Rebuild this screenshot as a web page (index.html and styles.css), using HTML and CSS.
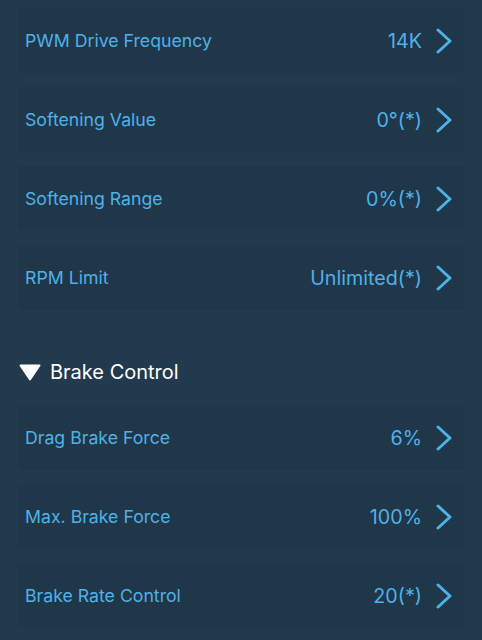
FILE: index.html
```html
<!DOCTYPE html>
<html lang="en">
<head>
    <meta charset="UTF-8">
    <meta name="viewport" content="width=device-width, initial-scale=1.0">
    <title>ESC Settings</title>
    <link rel="stylesheet" href="styles.css">
</head>
<body>

<div class="settings">
    <div class="group">
        <div class="row">
            <span class="row-label">PWM Drive Frequency</span>
            <span class="row-value">14K</span>
            <svg class="chevron" viewBox="0 0 16 26"><path d="M2 2 L14 13 L2 24"/></svg>
        </div>
        <div class="row">
            <span class="row-label">Softening Value</span>
            <span class="row-value">0°(*)</span>
            <svg class="chevron" viewBox="0 0 16 26"><path d="M2 2 L14 13 L2 24"/></svg>
        </div>
        <div class="row">
            <span class="row-label">Softening Range</span>
            <span class="row-value">0%(*)</span>
            <svg class="chevron" viewBox="0 0 16 26"><path d="M2 2 L14 13 L2 24"/></svg>
        </div>
        <div class="row">
            <span class="row-label">RPM Limit</span>
            <span class="row-value">Unlimited(*)</span>
            <svg class="chevron" viewBox="0 0 16 26"><path d="M2 2 L14 13 L2 24"/></svg>
        </div>
    </div>

    <div class="section-header">
        <svg class="triangle" viewBox="0 0 24 17"><path d="M2.5 1.5 H21.5 L12 15.5 Z"/></svg>
        <span>Brake Control</span>
    </div>

    <div class="group">
        <div class="row">
            <span class="row-label">Drag Brake Force</span>
            <span class="row-value">6%</span>
            <svg class="chevron" viewBox="0 0 16 26"><path d="M2 2 L14 13 L2 24"/></svg>
        </div>
        <div class="row">
            <span class="row-label">Max. Brake Force</span>
            <span class="row-value">100%</span>
            <svg class="chevron" viewBox="0 0 16 26"><path d="M2 2 L14 13 L2 24"/></svg>
        </div>
        <div class="row">
            <span class="row-label">Brake Rate Control</span>
            <span class="row-value">20(*)</span>
            <svg class="chevron" viewBox="0 0 16 26"><path d="M2 2 L14 13 L2 24"/></svg>
        </div>
    </div>
</div>

</body>
</html>
```

FILE: styles.css
```css
body {
    margin: 0;
    background-color: #213a4d;
    font-family: Inter, "Noto Sans", sans-serif;
}
.settings {
    padding: 8px 18px 0 17px;
}
.group {
    display: flex;
    flex-direction: column;
    gap: 14px;
}
.row {
    display: flex;
    align-items: center;
    height: 65px;
    padding: 0 12px 0 8px;
    background-color: #1f3748;
    border-radius: 4px;
    color: #4fb1ea;
    font-size: 17.7px;
}
.row-label {
    flex: 1;
}
.row-value {
    margin-right: 14px;
    font-size: 19.7px;
}
.chevron {
    width: 16px;
    height: 26px;
    fill: none;
    stroke: #4fb1ea;
    stroke-width: 3;
    stroke-linecap: round;
    stroke-linejoin: round;
}
.section-header {
    display: flex;
    align-items: center;
    gap: 8px;
    height: 30px;
    margin: 47px 0 18px 1px;
    color: #ffffff;
    font-size: 20px;
}
.triangle {
    width: 24px;
    height: 17px;
    fill: #ffffff;
    stroke: #ffffff;
    stroke-width: 2;
    stroke-linejoin: round;
}
```
